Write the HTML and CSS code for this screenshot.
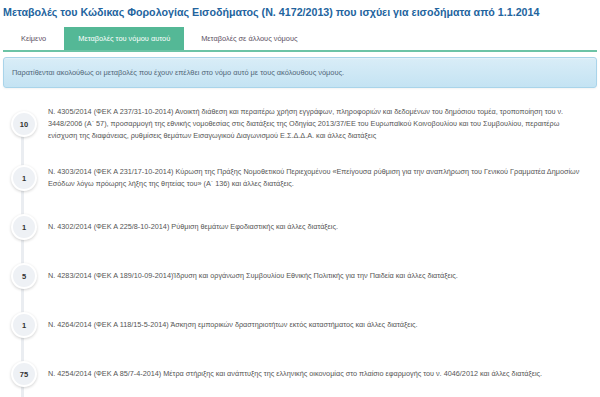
FILE: index.html
```html
<!DOCTYPE html>
<html lang="el">
<head>
  <meta charset="UTF-8" />
  <meta name="viewport" content="width=device-width, initial-scale=1.0" />
  <title>Μεταβολές του Κώδικας Φορολογίας Εισοδήματος</title>
  <link rel="stylesheet" href="styles.css">
</head>
<body>
  <h1 class="title">Μεταβολές του Κώδικας Φορολογίας Εισοδήματος (Ν. 4172/2013) που ισχύει για εισοδήματα από 1.1.2014</h1>

  <ul class="tabs">
    <li><a href="#">Κείμενο</a></li>
    <li class="active"><a href="#">Μεταβολές του νόμου αυτού</a></li>
    <li><a href="#">Μεταβολές σε άλλους νόμους</a></li>
  </ul>

  <div class="alert">Παρατίθενται ακολούθως οι μεταβολές που έχουν επέλθει στο νόμο αυτό με τους ακόλουθους νόμους.</div>

  <ul class="timeline">
    <li class="entry">
      <span class="badge">10</span>
      <p>Ν. 4305/2014 (ΦΕΚ Α 237/31-10-2014) Ανοικτή διάθεση και περαιτέρω χρήση εγγράφων, πληροφοριών και δεδομένων του δημόσιου τομέα, τροποποίηση του ν. 3448/2006 (Α΄ 57), προσαρμογή της εθνικής νομοθεσίας στις διατάξεις της Οδηγίας 2013/37/ΕΕ του Ευρωπαϊκού Κοινοβουλίου και του Συμβουλίου, περαιτέρω ενίσχυση της διαφάνειας, ρυθμίσεις θεμάτων Εισαγωγικού Διαγωνισμού Ε.Σ.Δ.Δ.Α. και άλλες διατάξεις</p>
    </li>
    <li class="entry">
      <span class="badge">1</span>
      <p>Ν. 4303/2014 (ΦΕΚ Α 231/17-10-2014) Κύρωση της Πράξης Νομοθετικού Περιεχομένου «Επείγουσα ρύθμιση για την αναπλήρωση του Γενικού Γραμματέα Δημοσίων Εσόδων λόγω πρόωρης λήξης της θητείας του» (Α΄ 136) και άλλες διατάξεις.</p>
    </li>
    <li class="entry">
      <span class="badge">1</span>
      <p>Ν. 4302/2014 (ΦΕΚ Α 225/8-10-2014) Ρύθμιση θεμάτων Εφοδιαστικής και άλλες διατάξεις.</p>
    </li>
    <li class="entry">
      <span class="badge">5</span>
      <p>Ν. 4283/2014 (ΦΕΚ Α 189/10-09-2014)Ίδρυση και οργάνωση Συμβουλίου Εθνικής Πολιτικής για την Παιδεία και άλλες διατάξεις.</p>
    </li>
    <li class="entry">
      <span class="badge">1</span>
      <p>Ν. 4264/2014 (ΦΕΚ Α 118/15-5-2014) Άσκηση εμπορικών δραστηριοτήτων εκτός καταστήματος και άλλες διατάξεις.</p>
    </li>
    <li class="entry">
      <span class="badge">75</span>
      <p>Ν. 4254/2014 (ΦΕΚ Α 85/7-4-2014) Μέτρα στήριξης και ανάπτυξης της ελληνικής οικονομίας στο πλαίσιο εφαρμογής του ν. 4046/2012 και άλλες διατάξεις.</p>
    </li>
  </ul>
</body>
</html>
```

FILE: styles.css
```css
body {
  margin: 0;
  padding: 0 3px;
  font-family: 'Liberation Sans', Arial, sans-serif;
  background: #fff;
  color: #555;
  overflow: hidden;
}
.title {
  margin: 5px 0 0;
  font-size: 10.7px;
  line-height: 14px;
  color: #23649e;
  font-weight: bold;
}
.tabs {
  list-style: none;
  margin: 8px 0 0;
  padding: 0;
  display: flex;
  border-bottom: 2px solid #6cc3a6;
}
.tabs li a {
  display: block;
  height: 23px;
  line-height: 23px;
  padding: 0 14px;
  font-size: 7.4px;
  color: #5b4f5f;
  text-decoration: none;
}
.tabs li:first-child a {
  padding: 0 18px;
}
.tabs li:last-child a {
  padding-left: 17px;
}
.tabs li.active a {
  background: #54b896;
  color: #fff;
}
.alert {
  margin-top: 5px;
  height: 29px;
  line-height: 29px;
  padding: 0 8px;
  font-size: 7.4px;
  color: #4f6677;
  background: linear-gradient(to bottom, #d9edf7, #c4e3f3);
  border: 1px solid #a9d4ea;
  border-radius: 3px;
  box-shadow: 0 1px 0 rgba(255,255,255,0.25) inset, 0 1px 2px rgba(0,0,0,0.05);
}
.timeline {
  list-style: none;
  margin: 18px 0 0;
  padding: 0;
  position: relative;
}
.timeline::before {
  content: "";
  position: absolute;
  top: 18px;
  bottom: -40px;
  left: 18px;
  width: 3px;
  background: #eaedf1;
}
.entry {
  display: flex;
  align-items: center;
  margin-bottom: 23px;
  position: relative;
}
.badge {
  flex: none;
  width: 22px;
  height: 22px;
  margin-left: 8px;
  border-radius: 50%;
  border: 2px solid #fff;
  background: #eef1f5;
  box-shadow: 0 1px 3px rgba(0,0,0,0.18);
  font-size: 7.5px;
  font-weight: bold;
  color: #333;
  display: flex;
  align-items: center;
  justify-content: center;
}
.entry p {
  margin: 0 0 0 11px;
  font-size: 7.27px;
  line-height: 12px;
  max-width: 540px;
}
```
